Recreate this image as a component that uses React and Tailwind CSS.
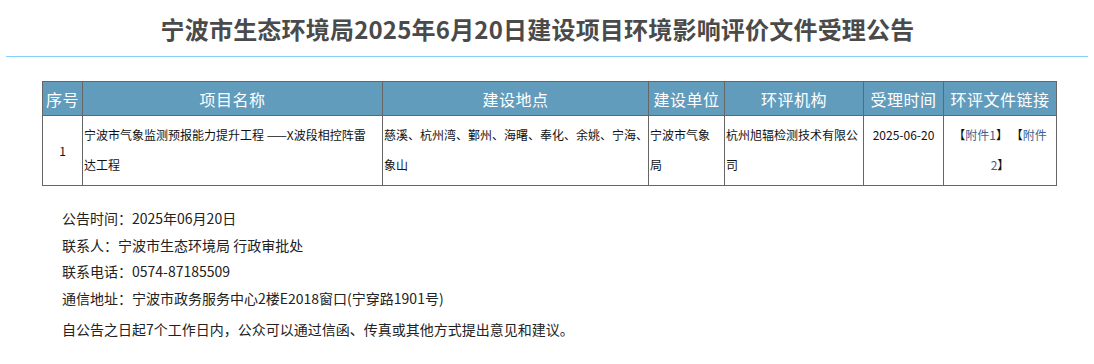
import React from 'react'

const font = { fontFamily: '"Microsoft YaHei", "Noto Sans CJK SC", sans-serif' }

const headers = [
  { label: '序号', w: 'w-[40px]' },
  { label: '项目名称', w: 'w-[300px]' },
  { label: '建设地点', w: 'w-[266px]' },
  { label: '建设单位', w: 'w-[76px]' },
  { label: '环评机构', w: 'w-[139px]' },
  { label: '受理时间', w: 'w-[80px]' },
  { label: '环评文件链接', w: 'w-[113px]' },
]

const App = () => {
  return (
    <div className="w-[1094px] h-[364px] bg-white" style={font}>
      {/* title */}
      <div className="px-[6px]">
        <h1 className="h-[56px] flex items-center justify-center text-[24px] font-bold text-[#4a4a4a] pt-[1px] pr-[19px] tracking-[0.2px]">
          宁波市生态环境局2025年6月20日建设项目环境影响评价文件受理公告
        </h1>
        <div className="h-px bg-[#87cefa]"></div>
      </div>

      {/* table */}
      <div className="pl-[42px] pt-[24px]">
        <table className="border-collapse table-fixed w-[1014px] text-[12px] text-[#111]">
          <thead>
            <tr className="h-[34px] bg-[#629cbc]">
              {headers.map((h) => (
                <th key={h.label} className={`${h.w} border border-[#666] text-white text-[16px] font-normal tracking-[0.5px] p-0`}>
                  {h.label}
                </th>
              ))}
            </tr>
          </thead>
          <tbody>
            <tr className="h-[70px] leading-[30px] whitespace-nowrap">
              <td className="border border-[#666] text-center align-middle">1</td>
              <td className="border border-[#666] align-top px-[1px] pt-[4px]">
                宁波市气象监测预报能力提升工程 ——X波段相控阵雷<br />达工程
              </td>
              <td className="border border-[#666] align-top px-[1px] pt-[4px]">
                慈溪、杭州湾、鄞州、海曙、奉化、余姚、宁海、<br />象山
              </td>
              <td className="border border-[#666] align-top px-[1px] pt-[4px]">宁波市气象<br />局</td>
              <td className="border border-[#666] align-top px-[1px] pt-[4px]">杭州旭辐检测技术有限公<br />司</td>
              <td className="border border-[#666] align-top text-center pt-[4px]">2025-06-20</td>
              <td className="border border-[#666] align-top text-center pt-[4px] px-[2px]">
                【<span className="text-[#3d5f8c]">附件1</span>】 【<span className="text-[#3d5f8c]">附件</span>
                <br />
                <span className="text-[#3d5f8c]">2</span>】
              </td>
            </tr>
          </tbody>
        </table>
      </div>

      {/* notice info */}
      <div className="pl-[62px] pt-[19px] text-[14px] text-[#222] leading-[26.5px]">
        <p>公告时间：2025年06月20日</p>
        <p>联系人：宁波市生态环境局 行政审批处</p>
        <p>联系电话：0574-87185509</p>
        <p>通信地址：宁波市政务服务中心2楼E2018窗口(宁穿路1901号)</p>
        <p className="mt-[5px]">自公告之日起7个工作日内，公众可以通过信函、传真或其他方式提出意见和建议。</p>
      </div>
    </div>
  )
}

export default App
